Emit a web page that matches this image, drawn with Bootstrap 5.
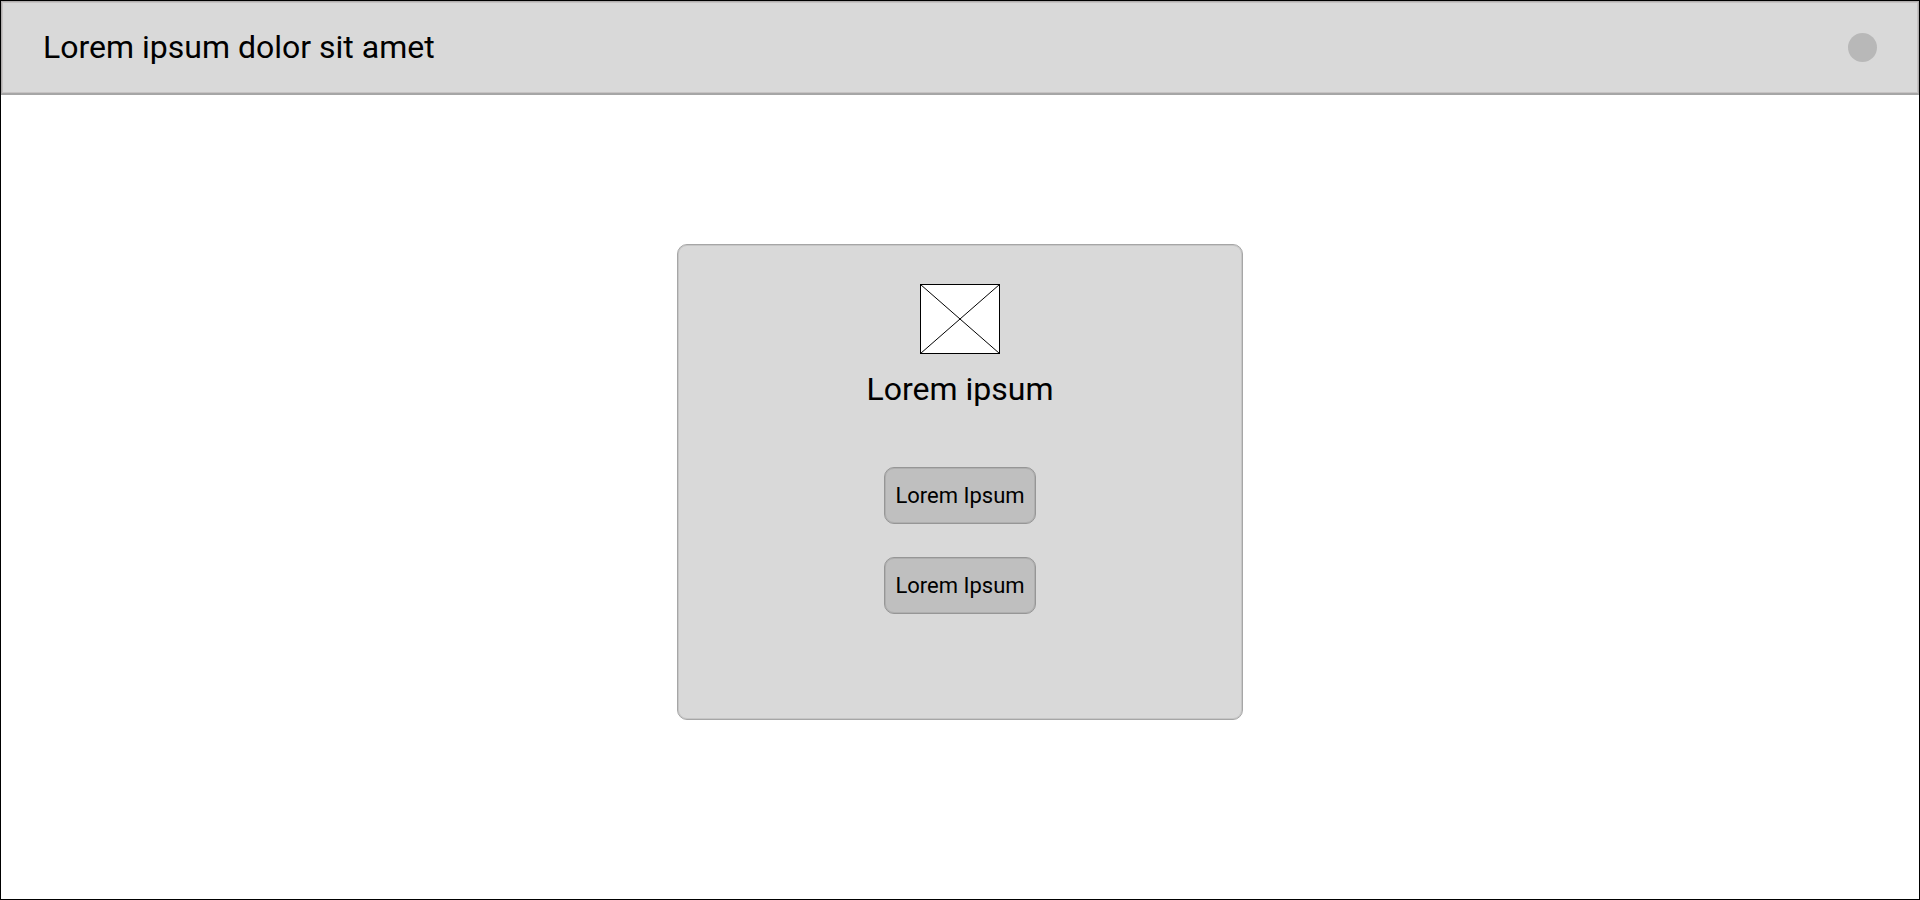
<!DOCTYPE html>
<html lang="la">
<head>
<meta charset="utf-8">
<meta name="viewport" content="width=device-width, initial-scale=1">
<title>Lorem ipsum dolor sit amet</title>
<link href="https://cdn.jsdelivr.net/npm/bootstrap@5.3.0/dist/css/bootstrap.min.css" rel="stylesheet">
<style>
body { font-family: Roboto, sans-serif; color: #000; background: #fff; }
.frame { border: 1px solid #000; }
.topbar { background: #d9d9d9; border: 1px solid #b0adad; border-bottom: 2px solid #a6a6a6; box-shadow: inset 0 0 0 1px #c6c3c3; padding: 21px 41px 22px; }
.title-text { font-size: 32px; line-height: 48px; font-weight: 400; color: #000; }
.avatar { width: 29px; height: 29px; background: #b8b8b8; }
.stage { padding-bottom: 30px; }
.panel { width: 566px; min-height: 476px; background: #d9d9d9; border: 1px solid #a6a6a6; box-shadow: inset 0 0 0 1px #c6c6c6; border-radius: 10px; padding-top: 39px; }
.picture { width: 80px; height: 70px; }
.panel-title { margin: 11px 0 54px; }
.actions { gap: 33px; }
.btn-wire { --bs-btn-padding-x: 10px; --bs-btn-padding-y: 11px; --bs-btn-font-size: 22px; --bs-btn-line-height: 33px; --bs-btn-color: #000; --bs-btn-bg: #bfbfbf; --bs-btn-border-color: #969696; --bs-btn-border-radius: 10px; --bs-btn-hover-bg: #b3b3b3; --bs-btn-hover-border-color: #808080; --bs-btn-active-bg: #a6a6a6; box-shadow: inset 0 0 0 1px #afafaf; }
</style>
</head>
<body>
<div class="frame min-vh-100 d-flex flex-column">
  <header class="topbar d-flex align-items-center justify-content-between">
    <h1 class="title-text m-0">Lorem ipsum dolor sit amet</h1>
    <span class="avatar rounded-circle"></span>
  </header>
  <main class="stage flex-grow-1 d-flex align-items-center justify-content-center">
    <section class="panel mw-100 d-flex flex-column align-items-center">
      <svg class="picture d-block" viewBox="0 0 80 70" aria-hidden="true">
        <rect x=".5" y=".5" width="79" height="69" fill="#fff" stroke="#000" shape-rendering="crispEdges"/>
        <path d="M.5 .5L79.5 69.5M79.5 .5L.5 69.5" stroke="#000" fill="none"/>
      </svg>
      <h2 class="title-text panel-title">Lorem ipsum</h2>
      <div class="actions d-flex flex-column">
        <button type="button" class="btn btn-wire">Lorem Ipsum</button>
        <button type="button" class="btn btn-wire">Lorem Ipsum</button>
      </div>
    </section>
  </main>
</div>
<script src="https://cdn.jsdelivr.net/npm/bootstrap@5.3.0/dist/js/bootstrap.bundle.min.js"></script>
</body>
</html>
